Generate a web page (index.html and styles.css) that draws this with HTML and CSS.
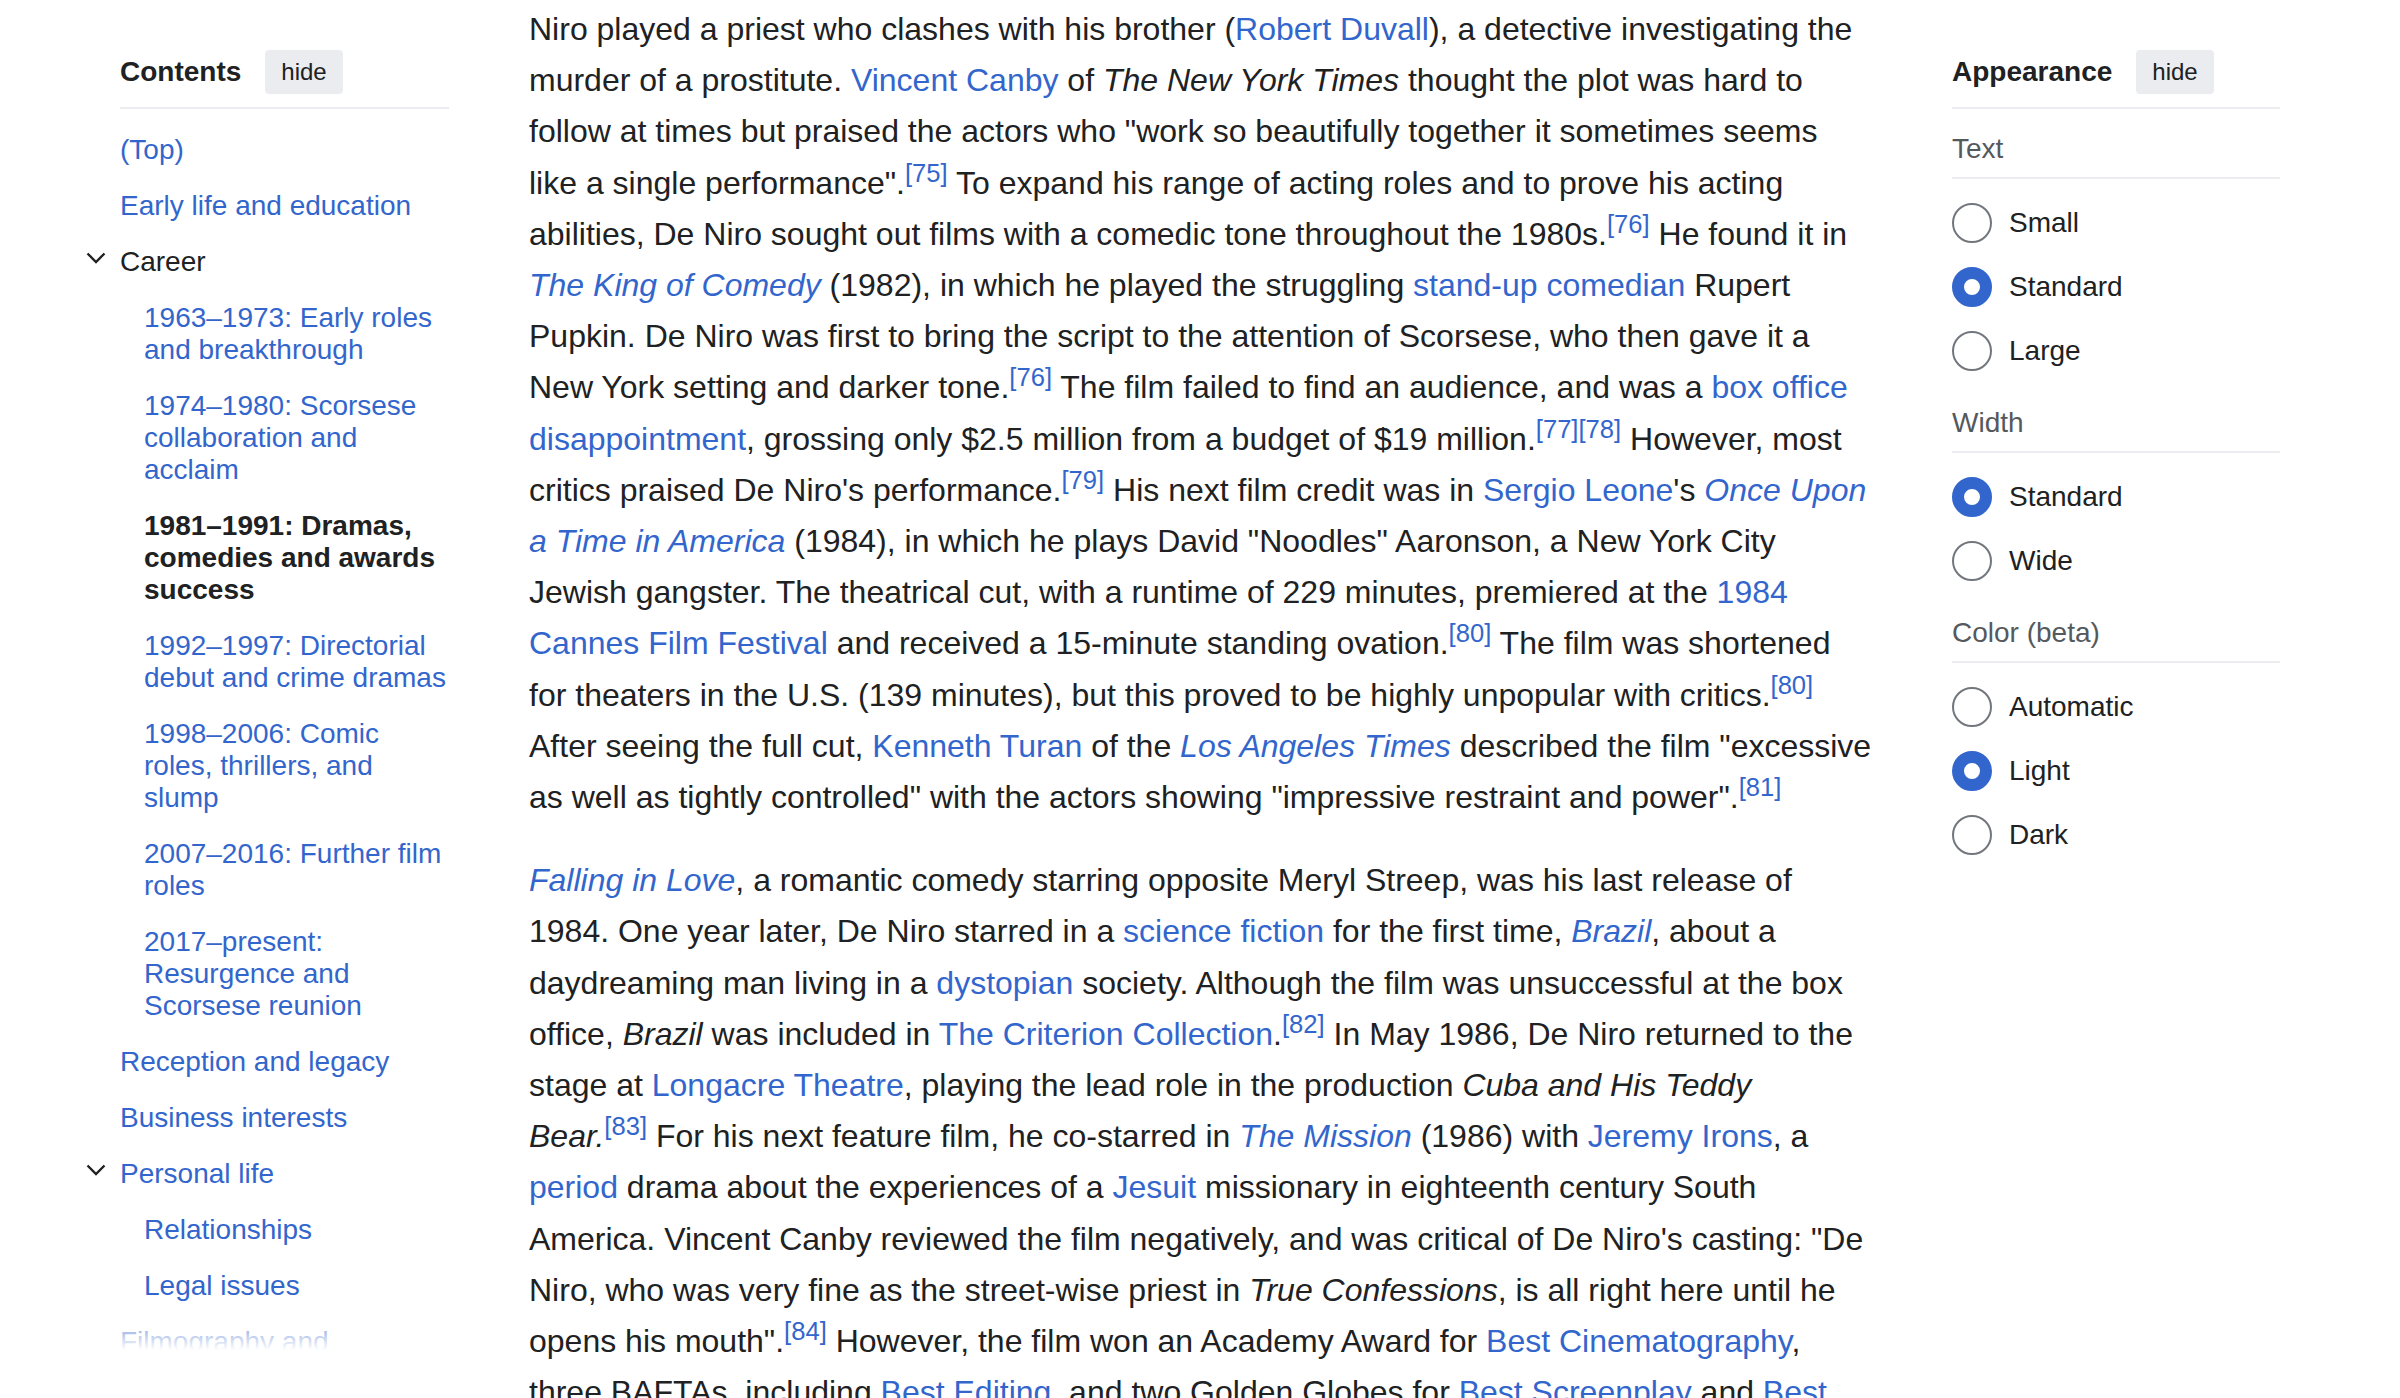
FILE: index.html
```html
<!DOCTYPE html>
<html lang="en">
<head>
<meta charset="utf-8">
<title>Robert De Niro</title>
<link rel="stylesheet" href="styles.css">
</head>
<body>
<div class="page">
  <nav class="toc">
    <div class="side-head">
      <span class="side-title">Contents</span>
      <button class="hide-btn">hide</button>
    </div>
    <ul class="toc-list">
      <li><a class="toc-link" href="#">(Top)</a></li>
      <li><a class="toc-link" href="#">Early life and education</a></li>
      <li>
        <div class="toc-row">
          <span class="toggle"><svg width="20" height="12" viewBox="0 0 20 12"><path d="M1.5 1.5 L10 10 L18.5 1.5" fill="none" stroke="#202122" stroke-width="2.4"/></svg></span>
          <span class="toc-link plain">Career</span>
        </div>
        <ul class="toc-sub">
          <li><a class="toc-link" href="#">1963–1973: Early roles and breakthrough</a></li>
          <li><a class="toc-link" href="#">1974–1980: Scorsese collaboration and acclaim</a></li>
          <li><span class="toc-link active">1981–1991: Dramas, comedies and awards success</span></li>
          <li><a class="toc-link" href="#">1992–1997: Directorial debut and crime dramas</a></li>
          <li><a class="toc-link" href="#">1998–2006: Comic roles, thrillers, and slump</a></li>
          <li><a class="toc-link" href="#">2007–2016: Further film roles</a></li>
          <li><a class="toc-link" href="#">2017–present: Resurgence and Scorsese reunion</a></li>
        </ul>
      </li>
      <li><a class="toc-link" href="#">Reception and legacy</a></li>
      <li><a class="toc-link" href="#">Business interests</a></li>
      <li>
        <div class="toc-row">
          <span class="toggle"><svg width="20" height="12" viewBox="0 0 20 12"><path d="M1.5 1.5 L10 10 L18.5 1.5" fill="none" stroke="#202122" stroke-width="2.4"/></svg></span>
          <a class="toc-link" href="#">Personal life</a>
        </div>
        <ul class="toc-sub">
          <li><a class="toc-link" href="#">Relationships</a></li>
          <li><a class="toc-link" href="#">Legal issues</a></li>
        </ul>
      </li>
      <li><a class="toc-link" href="#">Filmography and accolades</a></li>
      <li><a class="toc-link" href="#">See also</a></li>
    </ul>
  </nav>

  <main class="content">
    <p>Niro played a priest who clashes with his brother (<a href="#">Robert Duvall</a>), a detective investigating the murder of a prostitute. <a href="#">Vincent Canby</a> of <i>The New York Times</i> thought the plot was hard to follow at times but praised the actors who "work so beautifully together it sometimes seems like a single <span class="nw">performance".<sup class="ref"><a href="#">[75]</a></sup></span> To expand his range of acting roles and to prove his acting abilities, De Niro sought out films with a comedic tone throughout the <span class="nw">1980s.<sup class="ref"><a href="#">[76]</a></sup></span> He found it in <a href="#"><i>The King of Comedy</i></a> (1982), in which he played the struggling <a href="#">stand-up comedian</a> Rupert Pupkin. De Niro was first to bring the script to the attention of Scorsese, who then gave it a New York setting and darker <span class="nw">tone.<sup class="ref"><a href="#">[76]</a></sup></span> The film failed to find an audience, and was a <a href="#">box office disappointment</a>, grossing only $2.5 million from a budget of $19 <span class="nw">million.<sup class="ref"><a href="#">[77]</a></sup><sup class="ref"><a href="#">[78]</a></sup></span> However, most critics praised De Niro's <span class="nw">performance.<sup class="ref"><a href="#">[79]</a></sup></span> His next film credit was in <a href="#">Sergio Leone</a>'s <a href="#"><i>Once Upon a Time in America</i></a> (1984), in which he plays David "Noodles" Aaronson, a New York City Jewish gangster. The theatrical cut, with a runtime of 229 minutes, premiered at the <a href="#">1984 Cannes Film Festival</a> and received a 15-minute standing <span class="nw">ovation.<sup class="ref"><a href="#">[80]</a></sup></span> The film was shortened for theaters in the U.S. (139 minutes), but this proved to be highly unpopular with <span class="nw">critics.<sup class="ref"><a href="#">[80]</a></sup></span> After seeing the full cut, <a href="#">Kenneth Turan</a> of the <a href="#"><i>Los Angeles Times</i></a> described the film "excessive as well as tightly controlled" with the actors showing "impressive restraint and <span class="nw">power".<sup class="ref"><a href="#">[81]</a></sup></span></p>
    <p><a href="#"><i>Falling in Love</i></a>, a romantic comedy starring opposite Meryl Streep, was his last release of 1984. One year later, De Niro starred in a <a href="#">science fiction</a> for the first time, <a href="#"><i>Brazil</i></a>, about a daydreaming man living in a <a href="#">dystopian</a> society. Although the film was unsuccessful at the box office, <i>Brazil</i> was included in <a href="#">The Criterion <span class="nw">Collection</span></a><span class="nw">.<sup class="ref"><a href="#">[82]</a></sup></span> In May 1986, De Niro returned to the stage at <a href="#">Longacre Theatre</a>, playing the lead role in the production <i>Cuba and His Teddy</i> <span class="nw"><i>Bear.</i><sup class="ref"><a href="#">[83]</a></sup></span> For his next feature film, he co-starred in <a href="#"><i>The Mission</i></a> (1986) with <a href="#">Jeremy Irons</a>, a <a href="#">period</a> drama about the experiences of a <a href="#">Jesuit</a> missionary in eighteenth century South America. Vincent Canby reviewed the film negatively, and was critical of De Niro's casting: "De Niro, who was very fine as the street-wise priest in <i>True Confessions</i>, is all right here until he opens his <span class="nw">mouth".<sup class="ref"><a href="#">[84]</a></sup></span> However, the film won an Academy Award for <a href="#">Best Cinematography</a>, three BAFTAs, including <a href="#">Best Editing</a>, and two Golden Globes for <a href="#">Best Screenplay</a> and <a href="#">Best Original Score</a>.</p>
  </main>

  <aside class="appearance">
    <div class="side-head">
      <span class="side-title">Appearance</span>
      <button class="hide-btn">hide</button>
    </div>
    <section class="opt-group">
      <div class="opt-label">Text</div>
      <div class="opt-list">
        <div class="opt-row"><span class="radio"></span><span>Small</span></div>
        <div class="opt-row"><span class="radio checked"></span><span>Standard</span></div>
        <div class="opt-row"><span class="radio"></span><span>Large</span></div>
      </div>
    </section>
    <section class="opt-group">
      <div class="opt-label">Width</div>
      <div class="opt-list">
        <div class="opt-row"><span class="radio checked"></span><span>Standard</span></div>
        <div class="opt-row"><span class="radio"></span><span>Wide</span></div>
      </div>
    </section>
    <section class="opt-group">
      <div class="opt-label">Color (beta)</div>
      <div class="opt-list">
        <div class="opt-row"><span class="radio"></span><span>Automatic</span></div>
        <div class="opt-row"><span class="radio checked"></span><span>Light</span></div>
        <div class="opt-row"><span class="radio"></span><span>Dark</span></div>
      </div>
    </section>
  </aside>
</div>
</body>
</html>
```

FILE: styles.css
```css
html, body {
  margin: 0;
  height: 1398px;
  overflow: hidden;
  background: #fff;
}

body {
  font-family: "Liberation Sans", Arial, Helvetica, sans-serif;
  color: #202122;
}

a {
  color: #3366cc;
  text-decoration: none;
}

.page {
  display: grid;
  grid-template-columns: 369px 80px 1344px 79px 328px;
  padding-left: 80px;
  align-items: start;
}

.toc { grid-column: 1; }
.content { grid-column: 3; }
.appearance { grid-column: 5; }

/* ---------- sidebar headers ---------- */
.side-head {
  display: flex;
  align-items: center;
  gap: 24px;
  padding-bottom: 13px;
  border-bottom: 2px solid #eaecf0;
}

.side-title {
  font-size: 28px;
  font-weight: bold;
  line-height: 32px;
}

.hide-btn {
  font-family: inherit;
  font-size: 24px;
  color: #202122;
  background: #eaecf0;
  border: none;
  border-radius: 4px;
  height: 44px;
  padding: 0 16px;
  line-height: 44px;
}

/* ---------- table of contents ---------- */
.toc {
  position: relative;
  box-sizing: border-box;
  height: 1358px;
  overflow: hidden;
  padding: 50px 0 0 40px;
}

.toc::after {
  content: "";
  position: absolute;
  left: 0;
  right: 0;
  bottom: 0;
  height: 52px;
  background: linear-gradient(rgba(255, 255, 255, 0), #fff 85%);
}

.toc-list,
.toc-sub {
  list-style: none;
  margin: 0;
  padding: 0;
}

.toc-list {
  padding-top: 13px;
}

.toc-sub {
  padding-left: 24px;
}

.toc-link {
  display: block;
  font-size: 28px;
  line-height: 32px;
  padding: 12px 0;
}

.toc-link.plain {
  color: #202122;
}

.toc-link.active {
  color: #202122;
  font-weight: bold;
}

.toc-row {
  display: flex;
  align-items: flex-start;
  margin-left: -40px;
}

.toggle {
  width: 34px;
  padding: 18px 0 0 6px;
  display: flex;
}

/* ---------- article ---------- */
.content {
  padding-top: 4px;
  font-size: 32px;
  line-height: 51.2px;
}

.content p {
  margin: 0 0 32px;
}

.nw {
  white-space: nowrap;
}

.ref {
  font-size: 0.8em;
  line-height: 1;
  vertical-align: super;
}

/* ---------- appearance ---------- */
.appearance {
  padding-top: 50px;
}

.opt-group {
  margin-top: 24px;
}

.opt-label {
  font-size: 28px;
  line-height: 32px;
  color: #54595d;
  padding-bottom: 12px;
  border-bottom: 2px solid #eaecf0;
}

.opt-list {
  padding-top: 12px;
}

.opt-row {
  display: flex;
  align-items: center;
  gap: 17px;
  height: 64px;
  font-size: 28px;
}

.radio {
  box-sizing: border-box;
  width: 40px;
  height: 40px;
  border-radius: 50%;
  border: 2px solid #72777d;
  background: #fff;
}

.radio.checked {
  border: 12px solid #3366cc;
}
```
